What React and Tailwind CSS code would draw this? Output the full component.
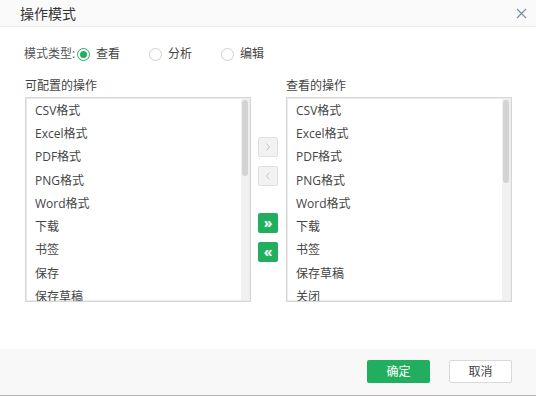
const font = { fontFamily: '"Open Sans", "Noto Sans CJK SC", sans-serif' };

const leftItems = ['CSV格式', 'Excel格式', 'PDF格式', 'PNG格式', 'Word格式', '下载', '书签', '保存', '保存草稿'];
const rightItems = ['CSV格式', 'Excel格式', 'PDF格式', 'PNG格式', 'Word格式', '下载', '书签', '保存草稿', '关闭'];

const Radio = ({ label, checked }) => (
    <label className="flex items-center gap-[6px]">
        <span
            className={
                checked
                    ? 'w-[13px] h-[13px] rounded-full border border-[#22ae5f] flex items-center justify-center'
                    : 'w-[13px] h-[13px] rounded-full border border-[#cfcfcf] bg-white'
            }
        >
            {checked && <span className="w-[7px] h-[7px] rounded-full bg-[#22ae5f]" />}
        </span>
        <span>{label}</span>
    </label>
);

const ListBox = ({ items, thumbH }) => (
    <div className="relative w-[226px] h-[205px] border border-[#d6d6d6] shadow-[inset_0_0_0_1px_#ececec] bg-white overflow-hidden">
        <div className="pt-[1px] pl-[9px]">
            {items.map((it) => (
                <div key={it} className="h-[23.3px] flex items-center text-[#444]">
                    {it}
                </div>
            ))}
        </div>
        <div className="absolute right-[1px] top-[1px] bottom-[1px] w-[8px] bg-[#f1f1f1]">
            <div className="mx-auto mt-[1px] w-[6px] rounded-[3px] bg-[#d3d3d3]" style={{ height: thumbH }} />
        </div>
    </div>
);

const MoveBtn = ({ children, active }) => (
    <div
        className={
            active
                ? 'w-[20px] h-[20px] rounded-[2px] bg-[#22ae5f] text-white flex items-center justify-center text-[14px] font-bold leading-none'
                : 'w-[20px] h-[20px] rounded-[2px] bg-[#f2f2f2] border border-[#e0e0e0] text-[#c4c4c4] flex items-center justify-center'
        }
    >
        {children}
    </div>
);

const Chevron = ({ dir }) => (
    <svg width="8" height="10" viewBox="0 0 8 10" fill="none" stroke="currentColor" strokeWidth="1">
        {dir === 'right' ? <path d="M2.5 1.5 L5.5 5 L2.5 8.5" /> : <path d="M5.5 1.5 L2.5 5 L5.5 8.5" />}
    </svg>
);

const App = () => {
    return (
        <div className="w-[536px] h-[396px] bg-white flex flex-col text-[12px] text-[#444]" style={font}>
            <div className="h-[27px] shrink-0 bg-[#fafafa] border-b border-[#ececec] flex items-center justify-between pl-[20px] pr-[9px]">
                <span className="text-[14px] text-[#333]">操作模式</span>
                <svg width="11" height="11" viewBox="0 0 11 11" stroke="#7a8aa0" strokeWidth="1.1">
                    <path d="M1 1 L10 10 M10 1 L1 10" />
                </svg>
            </div>

            <div className="flex-1 pl-[25px] pt-[18px]">
                <div className="flex items-center h-[18px]">
                    <span className="w-[53px] -ml-[1px] text-[#555]">模式类型:</span>
                    <div className="w-[72px]"><Radio label="查看" checked /></div>
                    <div className="w-[72px]"><Radio label="分析" /></div>
                    <Radio label="编辑" />
                </div>

                <div className="flex mt-[14px]">
                    <div className="flex flex-col">
                        <div className="h-[20px] text-[#444]">可配置的操作</div>
                        <ListBox items={leftItems} thumbH={76} />
                    </div>
                    <div className="flex flex-col gap-[9px] ml-[7px] mr-[8px] pt-[60px]">
                        <MoveBtn><Chevron dir="right" /></MoveBtn>
                        <MoveBtn><Chevron dir="left" /></MoveBtn>
                        <div className="h-[9px]" />
                        <MoveBtn active>»</MoveBtn>
                        <MoveBtn active>«</MoveBtn>
                    </div>
                    <div className="flex flex-col">
                        <div className="h-[20px] text-[#444]">查看的操作</div>
                        <ListBox items={rightItems} thumbH={83} />
                    </div>
                </div>
            </div>

            <div className="h-[47px] shrink-0 bg-[#f8f8f8] border-b border-[#b5b5b5] flex items-center justify-end gap-[19px] pr-[24px] pb-[1px]">
                <button className="w-[63px] h-[23px] rounded-[2px] bg-[#22ae5f] text-white">确定</button>
                <button className="w-[63px] h-[23px] rounded-[2px] bg-white border border-[#d9d9d9] text-[#444]">取消</button>
            </div>
        </div>
    );
};

export default App;
